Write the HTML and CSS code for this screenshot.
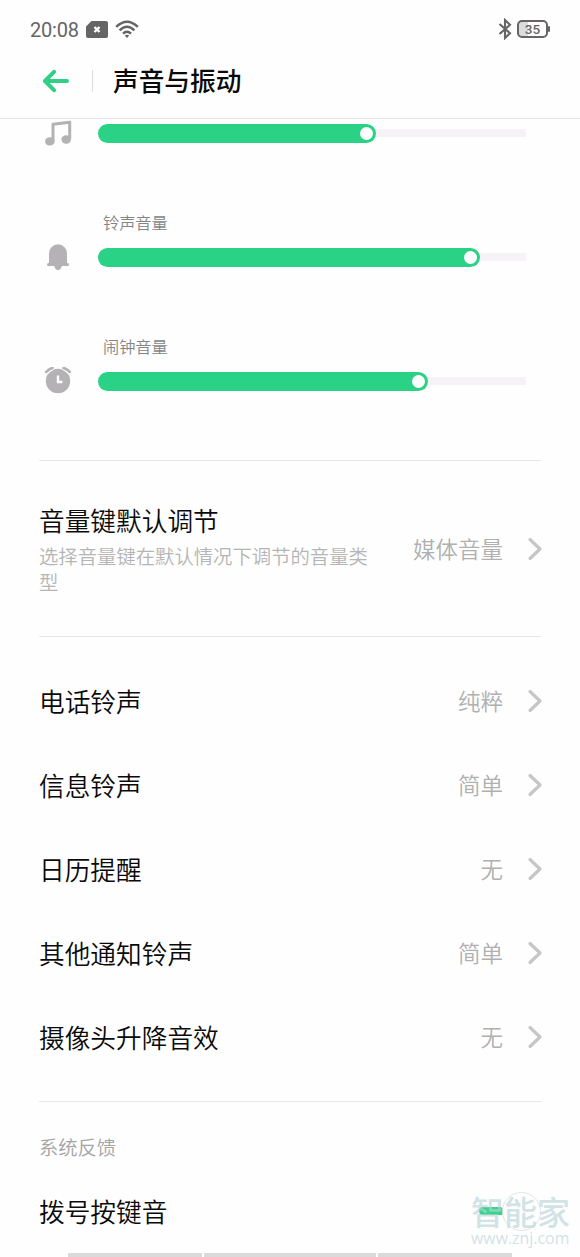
FILE: index.html
```html
<!DOCTYPE html>
<html lang="zh-CN">
<head>
<meta charset="utf-8">
<title>声音与振动</title>
<link rel="stylesheet" href="styles.css">
</head>
<body>
<div class="screen">
  <div class="status">
    <span class="time">20:08</span>
    <svg class="sim" width="22" height="17" viewBox="0 0 22 17"><path d="M5.500 0H20a2 2 0 0 1 2 2v13a2 2 0 0 1-2 2H2a2 2 0 0 1-2-2V5.500z" fill="#656565"/><path d="M8.500 6l5 5M13.500 6l-5 5" stroke="#fff" stroke-width="2.400"/></svg>
    <svg class="wifi" width="24" height="19" viewBox="0 0 24 19" fill="none" stroke="#656565" stroke-width="2.500"><path d="M1.200 6.800Q12-3.400 22.800 6.800M4.600 10.300Q12 3.300 19.400 10.300M8 13.700Q12 9.800 16 13.700"/><path d="M9.800 15.500Q12 13.800 14.200 15.500L12 18z" fill="#656565" stroke="none"/></svg>
    <svg class="bt" width="14" height="22" viewBox="0 0 14 22" fill="none" stroke="#656565" stroke-width="2.100"><path d="M1.500 6L12 15.200 7 20V2l5 4.800L1.500 16"/></svg>
    <div class="battery"><span>35</span></div>
  </div>
  <header class="header">
    <svg width="28" height="24" viewBox="0 0 28 24" fill="none" stroke="#2fd085" stroke-width="4" stroke-linecap="round" stroke-linejoin="round"><path d="M12 2.800L3 12l9 9.200M3.500 12H25"/></svg>
    <i class="bar"></i>
    <h1>声音与振动</h1>
  </header>
  <section class="sliders">
    <div class="slider">
      <svg class="icon" width="28" height="28" viewBox="0 0 28 28"><path d="M9 22V5.200L25.700 3.200V20" fill="none" stroke="#b4b2b4" stroke-width="3" stroke-linejoin="round"/><ellipse cx="5.800" cy="22.400" rx="4.800" ry="4.200" fill="#b4b2b4"/><ellipse cx="22.200" cy="20.500" rx="4.800" ry="4.200" fill="#b4b2b4"/></svg>
      <div class="track"><div class="fill" style="width:278px"><i class="knob"></i></div></div>
    </div>
    <div class="caption">铃声音量</div>
    <div class="slider">
      <svg class="icon" width="28" height="28" viewBox="0 0 28 28" fill="#b4b2b4"><path d="M5 21V10.500a9 9.200 0 0 1 18 0V21z"/><rect x="3" y="20" width="22" height="3" rx="1.500"/><path d="M10 22h8q-.8 5-4 5t-4-5z"/></svg>
      <div class="track"><div class="fill" style="width:382px"><i class="knob"></i></div></div>
    </div>
    <div class="caption">闹钟音量</div>
    <div class="slider">
      <svg class="icon" width="28" height="28" viewBox="0 0 28 28"><circle cx="14" cy="14" r="12.200" fill="#b4b2b4"/><path d="M14 8.500V15h4.500" fill="none" stroke="#fff" stroke-width="2.400"/><path d="M2 5.500Q4.500 2 8.500 .8M26 5.500Q23.500 2 19.500 .8" fill="none" stroke="#fefefe" stroke-width="5"/><path d="M2.200 5Q4.500 2 8.500 .9M25.800 5Q23.500 2 19.500 .9" fill="none" stroke="#b4b2b4" stroke-width="2.600" stroke-linecap="round"/></svg>
      <div class="track"><div class="fill" style="width:330px"><i class="knob"></i></div></div>
    </div>
  </section>
  <section class="group key">
    <div class="copy"><h2>音量键默认调节</h2><p>选择音量键在默认情况下调节的音量类型</p></div>
    <span class="value">媒体音量</span>
    <svg class="chev" width="16" height="24" viewBox="0 0 16 24"><path d="M3 2.500l10 9.500-10 9.500"/></svg>
  </section>
  <section class="group">
    <div class="row"><h2>电话铃声</h2><span class="value">纯粹</span><svg class="chev" width="16" height="24" viewBox="0 0 16 24"><path d="M3 2.500l10 9.500-10 9.500"/></svg></div>
    <div class="row"><h2>信息铃声</h2><span class="value">简单</span><svg class="chev" width="16" height="24" viewBox="0 0 16 24"><path d="M3 2.500l10 9.500-10 9.500"/></svg></div>
    <div class="row"><h2>日历提醒</h2><span class="value">无</span><svg class="chev" width="16" height="24" viewBox="0 0 16 24"><path d="M3 2.500l10 9.500-10 9.500"/></svg></div>
    <div class="row"><h2>其他通知铃声</h2><span class="value">简单</span><svg class="chev" width="16" height="24" viewBox="0 0 16 24"><path d="M3 2.500l10 9.500-10 9.500"/></svg></div>
    <div class="row"><h2>摄像头升降音效</h2><span class="value">无</span><svg class="chev" width="16" height="24" viewBox="0 0 16 24"><path d="M3 2.500l10 9.500-10 9.500"/></svg></div>
  </section>
  <section class="group feedback">
    <div class="label">系统反馈</div>
    <div class="row"><h2>拨号按键音</h2><i class="switch"></i></div>
  </section>
  <div class="nav"><i></i><i></i><i></i></div>
  <div class="mark">
    <i class="ring"></i>
    <b>智能家</b>
    <span>www.znj.com</span>
  </div>
</div>
</body>
</html>
```
FILE: styles.css
```css
* { box-sizing: border-box; }
body { margin: 0; background: #fefefe; font-family: "Noto Sans CJK SC", sans-serif; color: #0a0a0a; }
h1, h2, p { margin: 0; font-weight: 400; }
svg { display: block; flex: none; }
.screen { position: relative; width: 580px; height: 1257px; overflow: hidden; }

.status { display: flex; align-items: center; height: 58px; padding: 0 30px; color: #656565; }
.time { width: 56px; font: 20px/24px Roboto, sans-serif; letter-spacing: -.2px; margin-top: 2px; }
.wifi { margin-left: 7px; }
.bt { margin-left: auto; margin-right: 5px; }
.battery { position: relative; width: 31px; height: 18px; margin-right: 2px; border: 2px solid #656565; border-radius: 5px; background: linear-gradient(90deg, #ddd 35%, transparent 35%); text-align: center; font: 500 13.500px/15px Roboto, sans-serif; }
.battery::after { content: ""; position: absolute; right: -4px; top: 4px; width: 2px; height: 6px; border-radius: 1px; background: #656565; }

.header { display: flex; align-items: center; height: 61px; padding: 0 42px 15px; border-bottom: 1px solid #e6e4e6; }
.bar { width: 1px; height: 22px; margin: 0 20px 0 22px; background: #ddd; }
h1 { height: 40px; font-size: 25.700px; line-height: 38px; font-weight: 500; }

.sliders { height: 341px; overflow: hidden; }
.slider { display: flex; align-items: center; height: 28px; padding-left: 44px; }
.icon { margin-right: 26px; }
.track { display: flex; align-items: center; width: 428px; height: 19px; background: linear-gradient(#f6f3f6, #f6f3f6) center / 100% 8px no-repeat; border-radius: 5px; }
.fill { display: flex; align-items: center; justify-content: flex-end; height: 19px; padding-right: 3px; border-radius: 10px; background: #29d284; }
.knob { width: 13px; height: 13px; border-radius: 50%; background: #fff; }
.caption { height: 24px; margin: 63px 0 9px 103px; font-size: 16.200px; line-height: 24px; color: #858585; font-weight: 350; }

.group { margin: 0 39px; padding: 22px 0; border-top: 1px solid #e7e7e7; }
h2 { height: 38px; font-size: 25.700px; line-height: 38px; font-weight: 350; flex: 1; white-space: nowrap; }
.key { display: flex; align-items: center; height: 176px; padding: 0; }
.key h2 { line-height: 36px; }
.copy { width: 332px; }
.copy p { font-size: 19.350px; line-height: 26px; margin-top: 3px; color: #b5b5b5; font-weight: 350; }
.value { height: 34px; line-height: 32px; margin-left: auto; font-size: 22.500px; color: #b0b0b0; font-weight: 350; }
.chev { margin-left: 24px; margin-right: -2px; fill: none; stroke: #c6c6c6; stroke-width: 3.200; stroke-linecap: round; stroke-linejoin: round; }
.row { display: flex; align-items: center; height: 84px; }
.feedback { padding: 31px 0 0; }
.label { height: 28px; margin-bottom: 8px; font-size: 19.300px; line-height: 28px; color: #a3a3a3; font-weight: 350; }
.switch { width: 24px; height: 8px; margin-right: 38px; border-radius: 4px 3px 1px 4px; background: #35d38b; }

.nav { position: absolute; left: 68px; bottom: 0; display: flex; gap: 2px; }
.nav i { width: 134px; height: 4px; background: #dadada; }
.nav i:nth-child(2) { width: 172px; }
.mark { position: absolute; left: 471px; top: 1192px; width: 104px; height: 60px; color: rgba(184, 211, 216, .65); }
.mark b { position: absolute; left: 0; top: 1px; font-size: 33px; line-height: 36px; font-weight: 500; white-space: nowrap; }
.mark span { position: absolute; left: 0; top: 37px; font: 15.900px/18px "Open Sans", sans-serif; white-space: nowrap; }
.ring { position: absolute; left: 31px; top: 0; width: 39px; height: 39px; border: 1px solid #e2e6e7; border-radius: 50%; }
```
